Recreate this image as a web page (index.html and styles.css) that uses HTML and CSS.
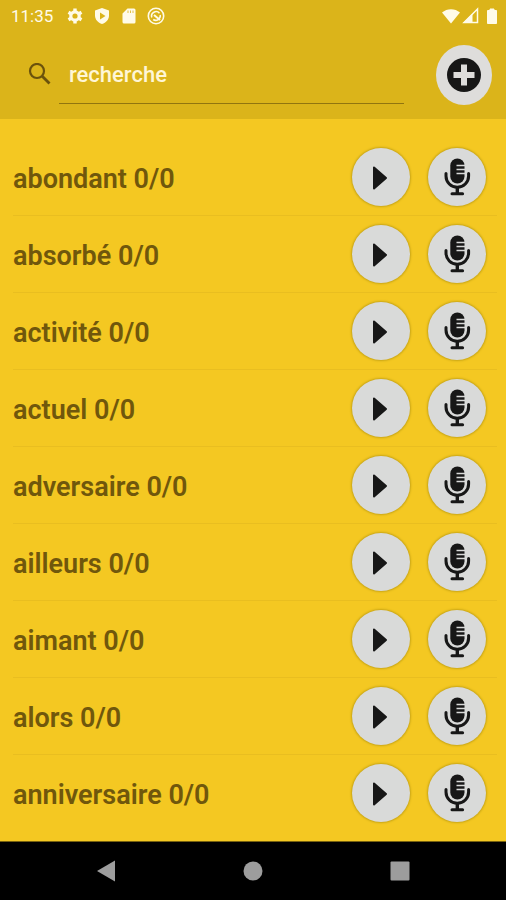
FILE: index.html
```html
<!DOCTYPE html>
<html lang="fr">
<head>
<meta charset="utf-8">
<meta name="viewport" content="width=device-width, initial-scale=1">
<title>Mots</title>
<link rel="stylesheet" href="styles.css">
</head>
<body>
<svg class="sprite" aria-hidden="true">
  <symbol id="play" viewBox="0 0 58 58"><path d="M22 19.500v21l12-10.500z" fill="#171717" stroke="#171717" stroke-width="2" stroke-linejoin="round"/></symbol>
  <symbol id="mic" viewBox="0 0 58 58">
    <rect x="22.300" y="10.500" width="14.200" height="25" rx="7.100" fill="#171717"/>
    <path d="M28.500 17.500h9M28.500 21.500h9M28.500 25.500h9" stroke="#d9dad9" stroke-width="1.700"/>
    <path d="M18 25.500v2.500a11.300 11.300 0 0 0 22.600 0v-2.500" fill="none" stroke="#171717" stroke-width="3" stroke-linecap="round"/>
    <path d="M29.300 39v7" stroke="#171717" stroke-width="3.400"/>
    <path d="M24 45.800h10.600" stroke="#171717" stroke-width="3" stroke-linecap="round"/>
  </symbol>
</svg>
<div class="screen">
  <header class="header">
    <div class="status">
      <span class="clock">11:35</span>
      <svg class="status-icon" viewBox="0 0 18 18"><circle cx="9" cy="9" r="4.200" fill="none" stroke="#fffbe8" stroke-width="3.200"/><path d="M9 1.500v3M9 13.500v3M2.500 5.250l2.600 1.500M12.900 11.250l2.600 1.500M2.500 12.750l2.600-1.500M12.900 6.750l2.600-1.500" stroke="#fffbe8" stroke-width="3.400"/></svg>
      <svg class="status-icon" viewBox="0 0 18 18"><path d="M9 1l7 2.500v5c0 4-3 7.300-7 8.500-4-1.200-7-4.500-7-8.500v-5z" fill="#fffbe8"/><path d="M7 5.500v7l5.500-3.500z" fill="#dbb41a"/></svg>
      <svg class="status-icon" viewBox="0 0 18 18"><path d="M7.500 1.500H14a1.500 1.500 0 0 1 1.500 1.500v12a1.500 1.500 0 0 1-1.500 1.500H4A1.500 1.500 0 0 1 2.500 15V6.500z" fill="#fffbe8"/><path d="M8 3.500v2.500M10.500 3.500v2.500M13 3.500v2.500" stroke="#dbb41a" stroke-width="0.800"/></svg>
      <svg class="status-icon" viewBox="0 0 18 18"><g fill="none" stroke="#fffbe8"><circle cx="9" cy="9" r="7.700" stroke-width="1.600"/><path d="M4.800 10.500a4.500 4.500 0 0 1 7.700-4.300M13.200 8a4.500 4.500 0 0 1-7 4.500" stroke-width="1.600"/><path d="M7 8l6 5" stroke-width="2"/></g></svg>
      <span class="status-end">
        <svg class="signal" viewBox="0 0 18 18"><path d="M0 5.500C5 1 13 1 18 5.500L9 16.500z" fill="#fffbe8"/></svg>
        <svg class="signal" viewBox="0 0 18 18"><path d="M2 15.500L15.500 2v13.500z" fill="none" stroke="#fffbe8" stroke-width="1.500"/><path d="M1 16L10.500 6.500V16z" fill="#fffbe8"/></svg>
        <svg class="battery" viewBox="0 0 12 18"><path d="M4 2h4v1.500h2.500v13h-9v-13H4z" fill="#fffbe8" stroke="#fffbe8" stroke-linejoin="round"/></svg>
      </span>
    </div>
    <div class="toolbar">
      <label class="search" for="search">
        <svg class="search-icon" viewBox="0 0 24 24" aria-label="Recherche"><g fill="none" stroke="#6b520c" stroke-width="2.200"><circle cx="9" cy="8" r="7"/><path d="M14 13l7.500 7.500" stroke-width="2.800"/></g></svg>
        <input id="search" class="search-input" type="text" placeholder="recherche">
      </label>
      <button class="add" type="button" aria-label="Ajouter"><svg class="add-icon" viewBox="0 0 34 34"><circle cx="17" cy="17" r="17" fill="#171717"/><path d="M17 6.500v21M6.500 17h21" stroke="#dedddb" stroke-width="6"/></svg></button>
    </div>
  </header>
  <main class="content">
    <ul class="words">
      <li class="word"><span class="label">abondant 0/0</span><button class="round" type="button" aria-label="Écouter abondant"><svg><use href="#play"/></svg></button><button class="round" type="button" aria-label="Enregistrer abondant"><svg><use href="#mic"/></svg></button></li>
      <li class="word"><span class="label">absorbé 0/0</span><button class="round" type="button" aria-label="Écouter absorbé"><svg><use href="#play"/></svg></button><button class="round" type="button" aria-label="Enregistrer absorbé"><svg><use href="#mic"/></svg></button></li>
      <li class="word"><span class="label">activité 0/0</span><button class="round" type="button" aria-label="Écouter activité"><svg><use href="#play"/></svg></button><button class="round" type="button" aria-label="Enregistrer activité"><svg><use href="#mic"/></svg></button></li>
      <li class="word"><span class="label">actuel 0/0</span><button class="round" type="button" aria-label="Écouter actuel"><svg><use href="#play"/></svg></button><button class="round" type="button" aria-label="Enregistrer actuel"><svg><use href="#mic"/></svg></button></li>
      <li class="word"><span class="label">adversaire 0/0</span><button class="round" type="button" aria-label="Écouter adversaire"><svg><use href="#play"/></svg></button><button class="round" type="button" aria-label="Enregistrer adversaire"><svg><use href="#mic"/></svg></button></li>
      <li class="word"><span class="label">ailleurs 0/0</span><button class="round" type="button" aria-label="Écouter ailleurs"><svg><use href="#play"/></svg></button><button class="round" type="button" aria-label="Enregistrer ailleurs"><svg><use href="#mic"/></svg></button></li>
      <li class="word"><span class="label">aimant 0/0</span><button class="round" type="button" aria-label="Écouter aimant"><svg><use href="#play"/></svg></button><button class="round" type="button" aria-label="Enregistrer aimant"><svg><use href="#mic"/></svg></button></li>
      <li class="word"><span class="label">alors 0/0</span><button class="round" type="button" aria-label="Écouter alors"><svg><use href="#play"/></svg></button><button class="round" type="button" aria-label="Enregistrer alors"><svg><use href="#mic"/></svg></button></li>
      <li class="word"><span class="label">anniversaire 0/0</span><button class="round" type="button" aria-label="Écouter anniversaire"><svg><use href="#play"/></svg></button><button class="round" type="button" aria-label="Enregistrer anniversaire"><svg><use href="#mic"/></svg></button></li>
    </ul>
  </main>
  <nav class="system-nav">
    <button class="nav-button" type="button" aria-label="Retour"><svg viewBox="0 0 22 22"><path d="M2 11L20 .5v21z" fill="#9d9d9d"/></svg></button>
    <button class="nav-button" type="button" aria-label="Accueil"><svg viewBox="0 0 22 22"><circle cx="11" cy="11" r="9.500" fill="#9d9d9d"/></svg></button>
    <button class="nav-button" type="button" aria-label="Applications"><svg viewBox="0 0 22 22"><rect x="1.500" y="1.500" width="19" height="19" rx="1" fill="#9d9d9d"/></svg></button>
  </nav>
</div>
</body>
</html>
```
FILE: styles.css
```css
* {
  box-sizing: border-box;
}

body {
  margin: 0;
  background: #f4c822;
  font-family: Roboto, sans-serif;
}

button {
  border: 0;
  padding: 0;
  background: none;
}

svg {
  display: block;
}

.sprite {
  display: none;
}

.screen {
  display: flex;
  flex-direction: column;
  min-height: 100vh;
}

.header {
  background: #dbb41a;
}

.status {
  display: flex;
  align-items: center;
  gap: 9px;
  height: 31px;
  padding: 0 8px 0 11px;
  color: #fffbe8;
}

.clock {
  margin-right: 4px;
  font-size: 17px;
  line-height: 24px;
}

.status-icon,
.signal {
  width: 18px;
  height: 18px;
}

.status-end {
  display: flex;
  align-items: center;
  gap: 2px;
  margin-left: auto;
}

.battery {
  width: 12px;
  height: 18px;
  margin-left: 4px;
}

.toolbar {
  display: flex;
  align-items: center;
  gap: 32px;
  height: 88px;
  padding: 0 14px 0 28px;
}

.search {
  display: flex;
  flex: 1;
  align-items: center;
  gap: 7px;
  min-width: 0;
}

.search-icon {
  flex: none;
  width: 24px;
  height: 24px;
}

.search-input {
  flex: 1;
  min-width: 0;
  height: 58px;
  padding: 0 10px;
  border: 0;
  border-bottom: 1px solid #91750f;
  background: none;
  color: #fff6d6;
  font: 500 22px/28px Roboto, sans-serif;
}

.search-input::placeholder {
  color: #fff6d6;
  opacity: 1;
}

.add {
  display: grid;
  flex: none;
  place-items: center;
  width: 56px;
  height: 60px;
  border-radius: 50%;
  background: #dedddb;
}

.add-icon {
  width: 34px;
  height: 34px;
}

.content {
  flex: 1;
  padding: 20px 9px 9px 13px;
}

.words {
  margin: 0;
  padding: 0;
  list-style: none;
}

.word {
  display: flex;
  align-items: center;
  gap: 18px;
  height: 77px;
  padding-right: 11px;
  border-bottom: 1px solid #e9be20;
}

.word:last-child {
  border-color: transparent;
}

.label {
  flex: 1;
  padding-top: 4px;
  color: #70570c;
  font-size: 27px;
  font-weight: 600;
  line-height: 32px;
}

.round {
  flex: none;
  width: 58px;
  height: 58px;
  border-radius: 50%;
  background: #d9dad9;
  box-shadow: 0 0 2px 1px #c8a516;
}

.round svg {
  width: 58px;
  height: 58px;
}

.system-nav {
  display: grid;
  grid-template-columns: repeat(3, 29%);
  justify-content: center;
  height: 59px;
  border-top: 1px solid #78620f;
  background: #000;
}

.nav-button {
  display: grid;
  place-items: center;
}

.nav-button svg {
  width: 22px;
  height: 22px;
}
```
